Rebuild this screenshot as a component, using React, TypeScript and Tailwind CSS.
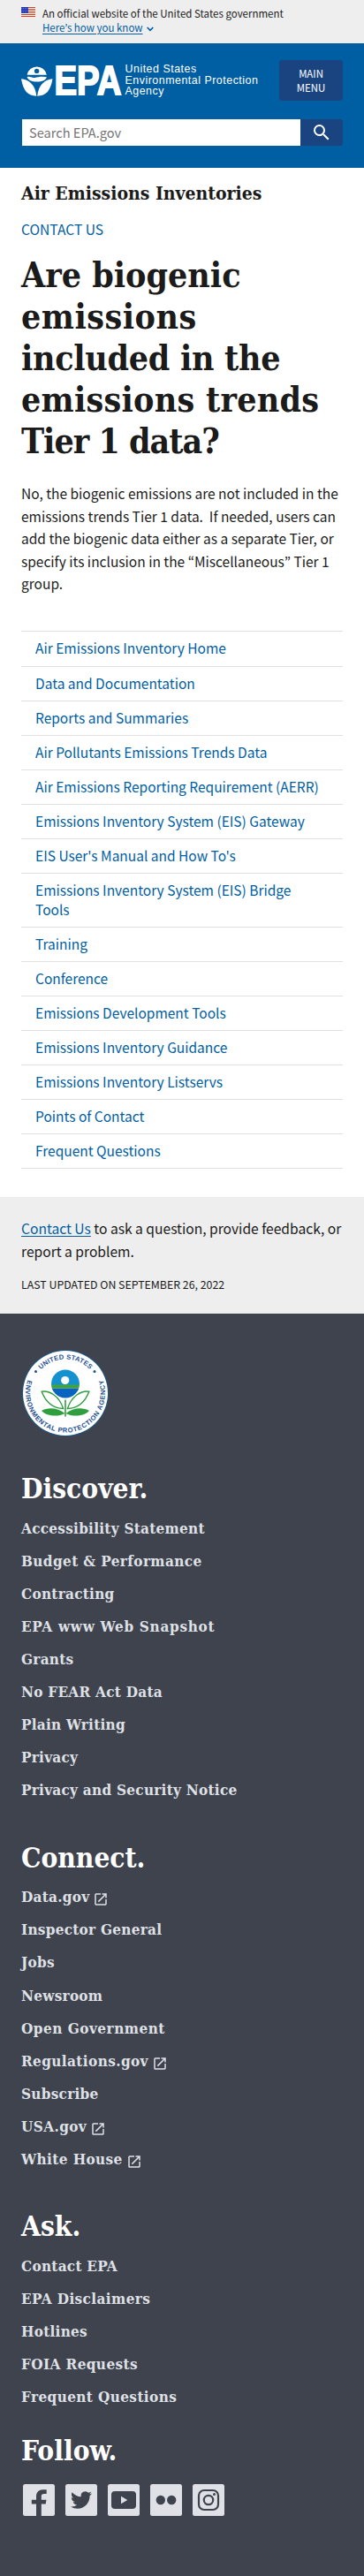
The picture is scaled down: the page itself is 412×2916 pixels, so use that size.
import type { ReactNode } from "react";

const SIDE_NAV = [
  "Air Emissions Inventory Home",
  "Data and Documentation",
  "Reports and Summaries",
  "Air Pollutants Emissions Trends Data",
  "Air Emissions Reporting Requirement (AERR)",
  "Emissions Inventory System (EIS) Gateway",
  "EIS User's Manual and How To's",
  "Emissions Inventory System (EIS) Bridge Tools",
  "Training",
  "Conference",
  "Emissions Development Tools",
  "Emissions Inventory Guidance",
  "Emissions Inventory Listservs",
  "Points of Contact",
  "Frequent Questions",
];

type FooterLink = { label: string; external?: boolean; tracking?: string };

const DISCOVER: FooterLink[] = [
  { label: "Accessibility Statement" },
  { label: "Budget & Performance", tracking: "tracking-[0.4px]" },
  { label: "Contracting" },
  { label: "EPA www Web Snapshot", tracking: "tracking-[0.7px]" },
  { label: "Grants" },
  { label: "No FEAR Act Data" },
  { label: "Plain Writing" },
  { label: "Privacy" },
  { label: "Privacy and Security Notice" },
];

const CONNECT: FooterLink[] = [
  { label: "Data.gov", external: true },
  { label: "Inspector General" },
  { label: "Jobs" },
  { label: "Newsroom" },
  { label: "Open Government", tracking: "tracking-[0.5px]" },
  { label: "Regulations.gov", external: true, tracking: "tracking-[0.4px]" },
  { label: "Subscribe" },
  { label: "USA.gov", external: true, tracking: "tracking-[0.4px]" },
  { label: "White House", external: true, tracking: "tracking-[0.4px]" },
];

const ASK: FooterLink[] = [
  { label: "Contact EPA" },
  { label: "EPA Disclaimers", tracking: "tracking-[0.4px]" },
  { label: "Hotlines" },
  { label: "FOIA Requests", tracking: "tracking-[0.4px]" },
  { label: "Frequent Questions", tracking: "tracking-[0.4px]" },
];

function Flag() {
  return (
    <svg width="16" height="11" viewBox="0 0 16 11" className="mt-px shrink-0">
      <rect width="16" height="11" fill="#fff" />
      {[0, 2, 4, 6, 8, 10].map((y) => (
        <rect key={y} y={y} width="16" height="1" fill="#db3e1f" />
      ))}
      <rect width="8" height="7" fill="#1e33b1" />
      {[1, 3, 5].map((y) =>
        [1, 3, 5, 7].map((x) => (
          <circle key={`${x}-${y}`} cx={x - (y === 3 ? 0 : 0.2)} cy={y + 0.4} r="0.45" fill="#fff" />
        )),
      )}
    </svg>
  );
}

function EpaMark() {
  return (
    <svg width="116" height="54" viewBox="0 -8 116 54" className="-mt-1 shrink-0 overflow-visible">
      <g fill="#fff">
        <path d="M6.600 12.700A11.300 11.300 0 0 1 28.800 12.700Z" />
        <path d="M6.600 15.200C9.500 13.800 12 16.600 15.500 15.900C19 15.200 24 14 28.900 15.300C28 18.600 23.700 20.600 17.800 20.600C12 20.600 7.800 18.600 6.600 15.200Z" />
        <path d="M0 17.300C8.500 18.300 16 23.500 17.300 36.800C7.500 36.300 2.600 31.500 0 17.300Z" />
        <path d="M35.500 17.300C27 18.300 19.500 23.500 18.200 36.800C28 36.300 32.900 31.500 35.500 17.300Z" />
      </g>
      <circle cx="17.600" cy="8.400" r="2.700" fill="#005ea2" />
      <text
        x="37.400"
        y="34.500"
        fill="#fff"
        stroke="#fff"
        strokeWidth="1.900"
        fontFamily="'Liberation Sans', Arial, sans-serif"
        fontWeight="700"
        fontSize="46"
        textLength="76"
        lengthAdjust="spacingAndGlyphs"
      >
        EPA
      </text>
    </svg>
  );
}

function SearchIcon() {
  return (
    <svg width="24" height="24" viewBox="0 0 24 24" fill="#fff">
      <path d="M15.500 14h-.790l-.280-.270A6.471 6.471 0 0 0 16 9.500 6.500 6.500 0 1 0 9.500 16c1.610 0 3.090-.590 4.230-1.570l.270.280v.790l5 4.990L20.490 19l-4.990-5zm-6 0C7.010 14 5 11.990 5 9.500S7.010 5 9.500 5 14 7.010 14 9.500 11.990 14 9.500 14z" />
    </svg>
  );
}

function ExternalIcon() {
  return (
    <svg width="18" height="18" viewBox="0 0 24 24" fill="#dfe1e6" className="ml-1 mt-[5px] shrink-0">
      <path d="M19 19H5V5h7V3H5a2 2 0 0 0-2 2v14a2 2 0 0 0 2 2h14c1.100 0 2-.900 2-2v-7h-2v7zM14 3v2h3.590l-9.830 9.830 1.410 1.410L19 6.410V10h2V3h-7z" />
    </svg>
  );
}

function Leaves() {
  return (
    <g fill="none" stroke="#2f9e3f" strokeWidth="1.400">
      <path d="M23.200 48.200C32 47 43 53 47.600 67.500C36 67 28 61 23.200 48.200Z" />
      <path d="M76.800 48.200C68 47 57 53 52.400 67.500C64 67 72 61 76.800 48.200Z" />
      <path d="M50 57.500V76.500" strokeWidth="1.600" />
      <path fill="#2f9e3f" stroke="none" d="M23 70C30 65.500 42 66.500 49.500 73C42 77 29 76.500 23 70Z" />
      <path fill="#2f9e3f" stroke="none" d="M77 70C70 65.500 58 66.500 50.500 73C58 77 71 76.500 77 70Z" />
    </g>
  );
}

function Seal() {
  return (
    <svg width="100" height="100" viewBox="0 0 100 100">
      <defs>
        <path id="seal-top" d="M11.500 50A38.500 38.500 0 0 1 88.500 50" />
        <path id="seal-bottom" d="M14.500 22A45 45 0 1 0 85.500 22" />
        <clipPath id="seal-disc">
          <circle cx="50" cy="39.500" r="16" />
        </clipPath>
      </defs>
      <circle cx="50" cy="50" r="49" fill="#1d5683" />
      <circle cx="50" cy="50" r="48" fill="#fff" />
      <g fill="#1d4f91" fontFamily="'Liberation Sans', Arial, sans-serif" fontSize="7.600" fontWeight="700">
        <text>
          <textPath href="#seal-top" startOffset="50%" textAnchor="middle" textLength="62">UNITED STATES</textPath>
        </text>
        <text>
          <textPath href="#seal-bottom" startOffset="50%" textAnchor="middle" textLength="171">ENVIRONMENTAL PROTECTION AGENCY</textPath>
        </text>
      </g>
      <circle cx="16.500" cy="25.500" r="1.500" fill="#1d4f91" />
      <circle cx="83" cy="25.500" r="1.500" fill="#1d4f91" />
      <g clipPath="url(#seal-disc)">
        <rect x="34" y="23" width="32" height="18" fill="#1591d0" />
        <rect x="34" y="40.500" width="32" height="4" fill="#3fa535" />
        <rect x="34" y="44.500" width="32" height="12" fill="#0a63bd" />
      </g>
      <circle cx="49.700" cy="35.500" r="4.600" fill="#fff" />
      <Leaves />
    </svg>
  );
}

function FooterGroup({ title, links, className }: { title: string; links: FooterLink[]; className: string }) {
  return (
    <section className={className}>
      <h2 className="text-[31.4px] font-bold leading-10 text-white">{title}</h2>
      <ul className="mt-[6.8px]">
        {links.map((link) => (
          <li key={link.label} className="flex h-[37.1px] items-center text-[17px] font-bold text-[#dfe1e6]">
            <a className={link.tracking ?? "tracking-[0.27px]"}>{link.label}</a>
            {link.external && <ExternalIcon />}
          </li>
        ))}
      </ul>
    </section>
  );
}

function SocialTile({ children }: { children: ReactNode }) {
  return (
    <a className="block">
      <svg width="36" height="36" viewBox="0 0 36 36">
        <rect width="36" height="36" rx="2.500" fill="#dfe1e6" />
        {children}
      </svg>
    </a>
  );
}

function Social() {
  return (
    <div className="ml-0.5 mt-[18px] flex gap-3">
      <SocialTile>
        <path fill="#3f434e" d="M15 36V22.500H9.800V17.800H15V14C15 9.200 18 6.200 22.500 6.200H26.700V11H23.800C21.600 11 20.800 12 20.800 13.800V17.800H26.500L25.700 22.500H20.800V36Z" />
      </SocialTile>
      <SocialTile>
        <path
          fill="#3f434e"
          transform="translate(6 6)"
          d="M23.953 4.570a10 10 0 0 1-2.825.775 4.958 4.958 0 0 0 2.163-2.723c-.951.555-2.005.959-3.127 1.184a4.920 4.920 0 0 0-8.384 4.482C7.690 8.095 4.067 6.130 1.640 3.162a4.822 4.822 0 0 0-.666 2.475c0 1.710.870 3.213 2.188 4.096a4.904 4.904 0 0 1-2.228-.616v.060a4.923 4.923 0 0 0 3.946 4.827 4.996 4.996 0 0 1-2.212.085 4.936 4.936 0 0 0 4.604 3.417 9.867 9.867 0 0 1-6.102 2.105c-.390 0-.779-.023-1.170-.067a13.995 13.995 0 0 0 7.557 2.209c9.053 0 13.998-7.496 13.998-13.985 0-.210 0-.420-.015-.630A9.935 9.935 0 0 0 24 4.590z"
        />
      </SocialTile>
      <SocialTile>
        <rect x="4" y="8" width="28" height="20" rx="4" fill="#3f434e" />
        <path fill="#dfe1e6" d="M15 13.800L22.300 18L15 22.200Z" />
      </SocialTile>
      <SocialTile>
        <circle cx="11.800" cy="18" r="5.200" fill="#3f434e" />
        <circle cx="24.200" cy="18" r="5.200" fill="#3f434e" />
      </SocialTile>
      <SocialTile>
        <rect x="7" y="7" width="22" height="22" rx="6" fill="none" stroke="#3f434e" strokeWidth="2.200" />
        <circle cx="18" cy="18" r="5.200" fill="none" stroke="#3f434e" strokeWidth="2.200" />
        <circle cx="24.500" cy="11.500" r="1.500" fill="#3f434e" />
      </SocialTile>
    </div>
  );
}

export default function App() {
  return (
    <div className="w-full bg-white font-['Noto_Sans_CJK_KR','Noto_Sans',sans-serif] text-[#1b1b1b]">
      <div className="flex h-[49px] gap-2 bg-[#eeeeee] px-6 pt-[7px] text-[11.5px] leading-4">
        <Flag />
        <div>
          <p>An official website of the United States government</p>
          <p className="flex items-center text-[#005ea2]">
            <a className="underline underline-offset-2">Here’s how you know</a>
            <svg width="8" height="6" viewBox="0 0 8 6" className="ml-1 mt-1" fill="none" stroke="#005ea2" strokeWidth="1.700">
              <path d="M0.700 1L4 4.300L7.300 1" />
            </svg>
          </p>
        </div>
      </div>

      <header className="h-[141px] bg-[#005ea2] px-6 pt-[19px]">
        <div className="flex h-[46px] items-start justify-between">
          <div className="flex items-start gap-[1.5px]">
            <EpaMark />
            <p className="mt-1 whitespace-nowrap font-['Liberation_Sans',Arial,sans-serif] text-[12.4px] leading-[12.7px] tracking-[0.52px] text-white">
              United States
              <br />
              Environmental Protection
              <br />
              Agency
            </p>
          </div>
          <button className="h-[46px] w-[72px] rounded-[3px] bg-[#1a4480] py-[7px] text-[11.4px] leading-4 text-white">
            MAIN
            <br />
            MENU
          </button>
        </div>
        <div className="mt-[21px] flex h-[30px]">
          <div className="ml-px flex w-[315px] items-center bg-white px-2 text-[14.6px] leading-none text-[#757575]">
            Search EPA.gov
          </div>
          <button className="flex w-12 items-center justify-center rounded-r-[3px] bg-[#1a4480]">
            <SearchIcon />
          </button>
        </div>
      </header>

      <main className="px-6 pt-[15px]">
        <div className="font-['DejaVu_Serif_Condensed','DejaVu_Serif',serif] text-[21px] font-bold leading-7">
          Air Emissions Inventories
        </div>
        <div className="mt-3.5 text-[15.6px] leading-6 text-[#005ea2]">CONTACT US</div>
        <h1 className="mt-[17px] whitespace-nowrap font-['DejaVu_Serif_Condensed','DejaVu_Serif',serif] text-[39px] font-bold leading-[47px]">
          <span className="block">Are biogenic</span>
          <span className="block tracking-[0.5px]">emissions</span>
          <span className="block tracking-[-0.3px]">included in the</span>
          <span className="block tracking-[0.25px]">emissions trends</span>
          <span className="block tracking-[-1px]">Tier 1 data?</span>
        </h1>
        <p className="mt-[23px] whitespace-nowrap text-[15.5px] leading-[25.5px]">
          No, the biogenic emissions are not included in the
          <br />
          emissions trends Tier 1 data.&nbsp; If needed, users can
          <br />
          add the biogenic data either as a separate Tier, or
          <br />
          specify its inclusion in the “Miscellaneous” Tier 1
          <br />
          group.
        </p>

        <ul className="mt-[40.5px] border-t border-[#dfe1e2] text-[15.5px] leading-[22px] text-[#005ea2]">
          {SIDE_NAV.map((item) => (
            <li key={item} className="border-b border-[#dfe1e2] pb-[9px] pl-4 pr-[22px] pt-[7px] first:pb-2.5">
              <a className="block max-w-[325px]">{item}</a>
            </li>
          ))}
        </ul>
      </main>

      <section className="mt-8 h-[132px] bg-[#eeeeee] px-6 pt-[23px]">
        <p className="whitespace-nowrap text-[15.6px] leading-[25.5px]">
          <a className="text-[#005ea2] underline underline-offset-2">Contact Us</a> to ask a question, provide feedback, or
          <br />
          report a problem.
        </p>
        <p className="mt-[15px] text-[12.35px] leading-5">LAST UPDATED ON SEPTEMBER 26, 2022</p>
      </section>

      <footer className="h-[1429px] bg-[#3f434e] px-6 pt-10 font-['DejaVu_Serif_Condensed','DejaVu_Serif',serif]">
        <Seal />
        <FooterGroup title="Discover." links={DISCOVER} className="mt-[38px]" />
        <FooterGroup title="Connect." links={CONNECT} className="mt-[37px]" />
        <FooterGroup title="Ask." links={ASK} className="mt-[37px]" />
        <h2 className="mt-[21.5px] text-[31.4px] font-bold leading-10 text-white">Follow.</h2>
        <Social />
      </footer>
    </div>
  );
}
